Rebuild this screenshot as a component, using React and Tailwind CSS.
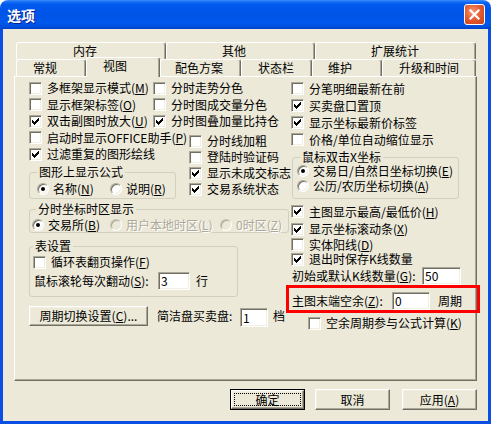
import React from 'react';

const K = ({ c }) => (
  <>
    (<u className="underline-offset-1">{c}</u>)
  </>
);

function Tick() {
  const tops = [4, 5, 6, 5, 4, 3, 2];
  return (
    <svg width="11" height="11" className="absolute left-0 top-0">
      {tops.map((t, i) => (
        <rect key={i} x={2 + i} y={t} width="1" height="3" fill="#000" />
      ))}
    </svg>
  );
}

function Box({ checked }) {
  return (
    <span className="relative block w-[13px] h-[13px] shrink-0 bg-white border border-t-[#aca899] border-l-[#aca899] border-b-white border-r-white shadow-[inset_1px_1px_0_#716f64,inset_-1px_-1px_0_#f1efe2]">
      {checked && <Tick />}
    </span>
  );
}

function Radio({ checked, disabled }) {
  return (
    <span
      className={`relative block w-[12px] h-[12px] shrink-0 rounded-full border border-b-white border-r-white ${
        disabled
          ? 'bg-[#ece9d8] border-t-[#c9c5b5] border-l-[#c9c5b5] shadow-[inset_1px_1px_0_#aca899]'
          : 'bg-white border-t-[#aca899] border-l-[#aca899] shadow-[inset_1px_1px_0_#716f64,inset_-1px_-1px_0_#f1efe2]'
      }`}
    >
      {checked && <span className="absolute left-[3px] top-[3px] w-[4px] h-[4px] rounded-full bg-black" />}
    </span>
  );
}

function CB({ checked, children, className = '' }) {
  return (
    <div className={`flex items-center ${className}`}>
      <Box checked={checked} />
      <span className="ml-[5px] whitespace-nowrap leading-[12px]">{children}</span>
    </div>
  );
}

function RB({ checked, disabled, children, className = '' }) {
  return (
    <div className={`flex items-center ${className}`}>
      <Radio checked={checked} disabled={disabled} />
      <span
        className={`ml-[4px] whitespace-nowrap leading-[12px] ${
          disabled ? 'text-[#aca899] [text-shadow:1px_1px_0_#ffffff]' : ''
        }`}
      >
        {children}
      </span>
    </div>
  );
}

function Input({ value, className = '' }) {
  return (
    <div
      className={`shrink-0 bg-white border border-t-[#aca899] border-l-[#aca899] border-b-white border-r-white shadow-[inset_1px_1px_0_#716f64,inset_-1px_-1px_0_#f1efe2] pl-[2px] flex items-center leading-[12px] ${className}`}
    >
      {value}
    </div>
  );
}

function Group({ title, className = '', legendClass = 'ml-[7px]', children }) {
  return (
    <fieldset className={`border border-[#d0d0bf] rounded-[3px] ${className}`}>
      <legend className={`${legendClass} px-[2px] leading-[14px]`}>{title}</legend>
      {children}
    </fieldset>
  );
}

function Raised({ className = '', children }) {
  return (
    <div
      className={`bg-[#ece9d8] border border-t-white border-l-white border-b-[#716f64] border-r-[#716f64] shadow-[inset_-1px_-1px_0_#aca899,inset_1px_1px_0_#f1efe2] flex items-center justify-center leading-[12px] ${className}`}
    >
      {children}
    </div>
  );
}

function Tab({ w, pl, children }) {
  return (
    <div
      className={`${w} ${pl} h-[17px] flex items-center leading-[14px] border-t border-l border-r border-t-white border-l-white border-r-[#716f64] shadow-[inset_-1px_0_0_#aca899] rounded-t-[3px]`}
    >
      {children}
    </div>
  );
}

export default function App() {
  return (
    <div className="w-[491px] h-[424px] bg-white text-[12px] text-black [font-family:'Noto_Sans_CJK_SC','Noto_Sans',sans-serif] overflow-hidden">
      {/* Title bar */}
      <div className="h-[29px] rounded-t-[8px] bg-[linear-gradient(180deg,#3b8cf9_0%,#1068f4_8%,#0058ee_16%,#0054e6_50%,#0058ee_78%,#004fdc_92%,#003fc8_100%)] flex items-center pl-[7px] pr-[6px]">
        <span className="mt-[1px] text-white font-bold text-[14px] leading-none [text-shadow:1px_1px_0_#0a1e8c]">选项</span>
        <div className="ml-auto w-[21px] h-[21px] rounded-[3px] border border-white bg-[radial-gradient(circle_at_40%_35%,#f39a72_0%,#e2592f_50%,#c93f14_100%)] flex items-center justify-center">
          <svg width="11" height="11" viewBox="0 0 11 11">
            <path d="M1.5 1.5 L9.5 9.5 M9.5 1.5 L1.5 9.5" stroke="#fff" strokeWidth="2.2" strokeLinecap="square" />
          </svg>
        </div>
      </div>

      {/* Body */}
      <div className="h-[395px] bg-[#ece9d8] border-x-[3px] border-b-[3px] border-[#0a4ee4] flex flex-col">
        {/* Tabs */}
        <div className="pt-[13px] pl-[13px]">
          <div className="flex h-[17px]">
            <Tab w="w-[150px]" pl="pl-[56px]">内存</Tab>
            <Tab w="w-[149px]" pl="pl-[55px]">其他</Tab>
            <Tab w="w-[161px]" pl="pl-[55px]">扩展统计</Tab>
          </div>
          <div className="flex h-[17px] items-end">
            <Tab w="w-[70px]" pl="pl-[16px]">常规</Tab>
            <div className="relative z-10 -mb-[1px] w-[74px] h-[20px] pl-[16px] pb-[4px] flex items-center leading-[14px] bg-[#ece9d8] border-t border-l border-r border-t-white border-l-white border-r-[#716f64] shadow-[inset_-1px_0_0_#aca899] rounded-t-[3px]">
              视图
            </div>
            <Tab w="w-[81px]" pl="pl-[14px]">配色方案</Tab>
            <Tab w="w-[71px]" pl="pl-[16px]">状态栏</Tab>
            <Tab w="w-[70px]" pl="pl-[15px]">维护</Tab>
            <Tab w="w-[94px]" pl="pl-[16px]">升级和时间</Tab>
          </div>
        </div>

        {/* Panel */}
        <div className="ml-[11px] w-[463px] h-[305px] shrink-0 border border-t-white border-l-white border-r-[#716f64] border-b-[#716f64] shadow-[inset_-1px_-1px_0_#aca899] flex">
          {/* Left column */}
          <div className="w-[277px] pl-[14px] pt-[3px] flex flex-col">
            <div className="flex items-center h-[16.5px]">
              <div className="w-[124px]"><CB>多框架显示模式<K c="M" /></CB></div>
              <CB>分时走势分色</CB>
            </div>
            <div className="flex items-center h-[16.5px]">
              <div className="w-[124px]"><CB>显示框架标签<K c="O" /></CB></div>
              <CB>分时图成交量分色</CB>
            </div>
            <div className="flex items-center h-[16.5px]">
              <div className="w-[124px]"><CB checked>双击副图时放大<K c="U" /></CB></div>
              <CB checked>分时图叠加量比持仓</CB>
            </div>

            <div className="flex">
              <div className="w-[160px] flex flex-col">
                <CB className="h-[16.5px]">启动时显示OFFICE助手<K c="P" /></CB>
                <CB checked className="h-[16.5px]">过滤重复的图形绘线</CB>
                <Group title="图形上显示公式" className="mt-[2.5px] w-[147px] pb-[1px]" legendClass="ml-[7px]">
                  <div className="flex items-center h-[16px] mt-[2px] pl-[7px]">
                    <RB checked className="w-[73px]">名称<K c="N" /></RB>
                    <RB>说明<K c="R" /></RB>
                  </div>
                </Group>
              </div>
              <div className="flex flex-col pt-[3.5px]">
                <CB className="h-[16px]">分时线加粗</CB>
                <CB className="h-[16px]">登陆时验证码</CB>
                <CB checked className="h-[16px]">显示未成交标志</CB>
                <CB checked className="h-[16px]">交易系统状态</CB>
              </div>
            </div>

            <Group title="分时坐标时区显示" className="mt-[3px] w-[260px]" legendClass="ml-[6px]">
              <div className="flex items-center h-[14px] mt-[2px] pl-[2px]">
                <RB checked className="w-[78px]">交易所<K c="B" /></RB>
                <RB disabled className="w-[110px]">用户本地时区<K c="L" /></RB>
                <RB disabled>0时区<K c="Z" /></RB>
              </div>
            </Group>

            <Group title="表设置" className="mt-[6px] w-[209px] pb-[6px]" legendClass="ml-[3px]">
              <CB className="mt-[1px] h-[16px] pl-[3px]">循环表翻页操作<K c="F" /></CB>
              <div className="mt-[2px] h-[18px] flex items-center pl-[4px]">
                <span className="w-[124px] whitespace-nowrap leading-[12px]">鼠标滚轮每次翻动<K c="S" />:</span>
                <Input value="3" className="w-[32px] h-[18px]" />
                <span className="ml-[6px] leading-[12px]">行</span>
              </div>
            </Group>

            <div className="mt-[9px] flex items-start">
              <Raised className="w-[119px] h-[20px] whitespace-nowrap">周期切换设置<K c="C" />...</Raised>
              <span className="ml-[9px] w-[83px] leading-[20px] whitespace-nowrap">简洁盘买卖盘:</span>
              <Input value="1" className="w-[28px] h-[19px] mt-[2px]" />
              <span className="ml-[5px] leading-[20px]">档</span>
            </div>
          </div>

          {/* Right column */}
          <div className="pt-[3px] flex flex-col">
            <CB className="h-[17px]">分笔明细最新在前</CB>
            <CB checked className="h-[17px]">买卖盘口置顶</CB>
            <CB checked className="h-[17px]">显示坐标最新价标签</CB>
            <CB className="h-[17px]">价格/单位自动缩位显示</CB>

            <Group title="鼠标双击X坐标" className="mt-[2px] ml-[1px] w-[167px] pb-[4px]" legendClass="ml-[7px]">
              <RB checked className="h-[13px] pl-[4px]">交易日/自然日坐标切换<K c="E" /></RB>
              <RB className="h-[17px] pl-[4px]">公历/农历坐标切换<K c="A" /></RB>
            </Group>

            <CB checked className="mt-[4px] h-[17px]">主图显示最高/最低价<K c="H" /></CB>
            <CB checked className="h-[18px]">显示坐标滚动条<K c="X" /></CB>
            <CB className="h-[13px]">实体阳线<K c="D" /></CB>
            <CB checked className="h-[16px]">退出时保存K线数量</CB>
            <div className="h-[18px] flex items-center pl-[1px]">
              <span className="w-[130px] whitespace-nowrap leading-[12px]">初始或默认K线数量<K c="G" />:</span>
              <Input value="50" className="w-[39px] h-[18px]" />
            </div>
            <div className="-ml-[5px] w-[194px] h-[28px] shrink-0 border-[3px] border-[#ff0000] flex items-start pl-[3px]">
              <span className="mt-[4px] w-[100px] leading-[18px] whitespace-nowrap">主图末端空余<K c="Z" />:</span>
              <Input value="0" className="mt-[4px] w-[38px] h-[18px]" />
              <span className="mt-[4px] ml-[8px] leading-[18px]">周期</span>
            </div>
            <CB className="mt-[2px] h-[16px] pl-[17px]">空余周期参与公式计算<K c="K" /></CB>
          </div>
        </div>

        {/* Buttons */}
        <div className="mt-[8px] flex justify-end pr-[11px]">
          <div className="w-[75px] h-[21px] border border-black">
            <Raised className="h-full p-[2px]">
              <div className="w-full h-full border border-dotted border-black flex items-center justify-center">确定</div>
            </Raised>
          </div>
          <Raised className="ml-[10px] w-[75px] h-[21px]">取消</Raised>
          <Raised className="ml-[12px] w-[75px] h-[21px]">应用<K c="A" /></Raised>
        </div>
      </div>
    </div>
  );
}
